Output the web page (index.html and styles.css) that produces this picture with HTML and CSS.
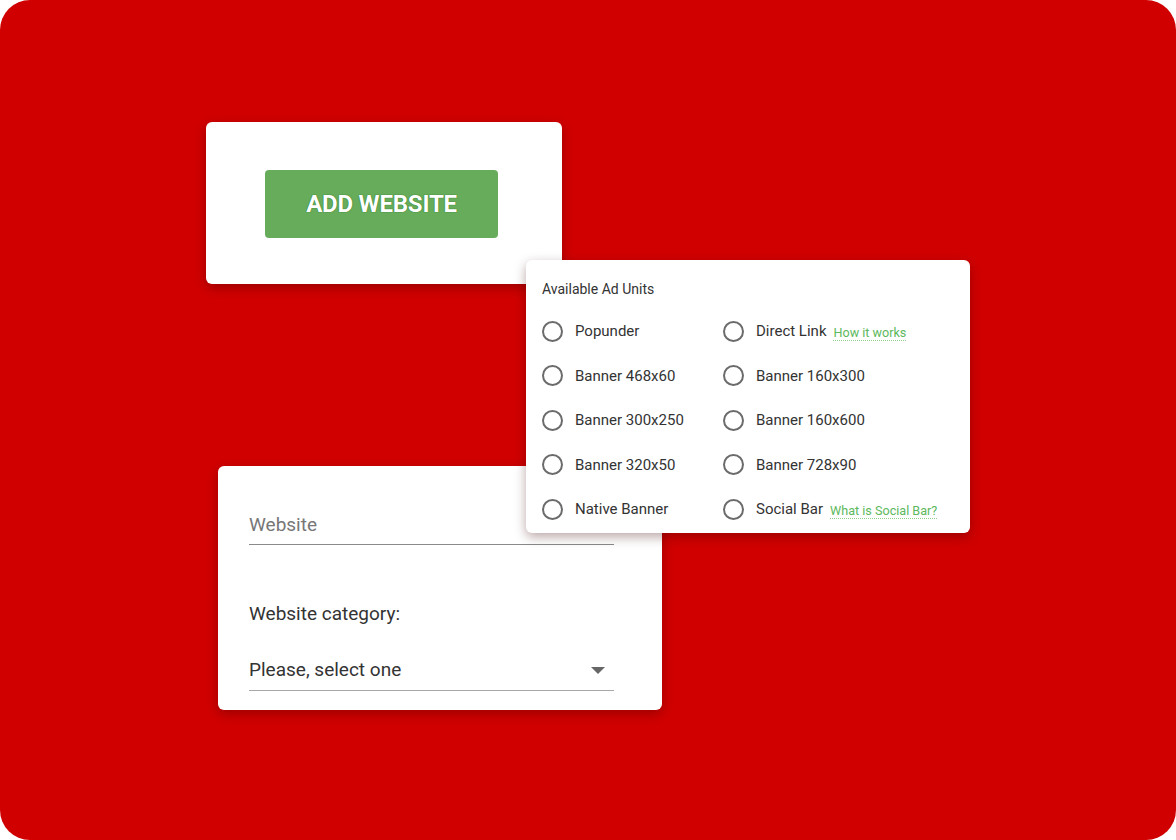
FILE: index.html
```html
<!DOCTYPE html>
<html>
<head>
<meta charset="utf-8">
<link rel="stylesheet" href="styles.css">
</head>
<body>
<div class="frame">
  <div class="card card-add">
    <button class="add-btn">ADD WEBSITE</button>
  </div>

  <div class="card card-form">
    <div class="field field-website">
      <span class="placeholder">Website</span>
    </div>
    <div class="cat-label">Website category:</div>
    <div class="field field-select">
      <span class="select-text">Please, select one</span>
      <span class="arrow"></span>
    </div>
  </div>

  <div class="card card-units">
    <div class="units-title">Available Ad Units</div>
    <div class="units-grid">
      <div class="unit"><span class="radio"></span><span class="unit-label">Popunder</span></div>
      <div class="unit"><span class="radio"></span><span class="unit-label">Direct Link</span><a class="hint">How it works</a></div>
      <div class="unit"><span class="radio"></span><span class="unit-label">Banner 468x60</span></div>
      <div class="unit"><span class="radio"></span><span class="unit-label">Banner 160x300</span></div>
      <div class="unit"><span class="radio"></span><span class="unit-label">Banner 300x250</span></div>
      <div class="unit"><span class="radio"></span><span class="unit-label">Banner 160x600</span></div>
      <div class="unit"><span class="radio"></span><span class="unit-label">Banner 320x50</span></div>
      <div class="unit"><span class="radio"></span><span class="unit-label">Banner 728x90</span></div>
      <div class="unit"><span class="radio"></span><span class="unit-label">Native Banner</span></div>
      <div class="unit"><span class="radio"></span><span class="unit-label">Social Bar</span><a class="hint">What is Social Bar?</a></div>
    </div>
  </div>
</div>
</body>
</html>
```

FILE: styles.css
```css
* { box-sizing: border-box; }
html, body {
  margin: 0;
  padding: 0;
  background: #ffffff;
}
body {
  font-family: Roboto, "Liberation Sans", Arial, sans-serif;
  width: 1176px;
  height: 840px;
  overflow: hidden;
}
.frame {
  position: relative;
  width: 1176px;
  height: 840px;
  background: #d10000;
  border-radius: 30px;
}
.card {
  position: absolute;
  background: #ffffff;
  border-radius: 6px;
  box-shadow: 0 4px 12px rgba(60, 0, 0, 0.35);
}

/* Card 1 */
.card-add {
  left: 206px;
  top: 122px;
  width: 356px;
  height: 162px;
  display: flex;
  align-items: center;
  justify-content: center;
  padding-top: 2px;
}
.add-btn {
  width: 233px;
  height: 68px;
  border: none;
  border-radius: 4px;
  background: #67ac5b;
  color: #ffffff;
  font-family: Roboto, "Liberation Sans", Arial, sans-serif;
  font-weight: 700;
  font-size: 24px;
  letter-spacing: -0.2px;
  text-shadow: 0 0 1px #2f7d2a, 0 0 1px #2f7d2a;
  margin-right: 5px;
  padding: 0;
}

/* Card 2 */
.card-units {
  left: 526px;
  top: 260px;
  width: 444px;
  height: 273px;
  padding: 19px 16px 0 16px;
  z-index: 3;
}
.units-title {
  font-size: 14px;
  line-height: 20px;
  color: #333333;
}
.units-grid {
  margin-top: 10px;
  display: grid;
  grid-template-columns: 181px 1fr;
  grid-auto-rows: 44.5px;
}
.unit {
  display: flex;
  align-items: center;
}
.radio {
  width: 21px;
  height: 21px;
  border: 2px solid #6b6b6b;
  border-radius: 50%;
  flex: none;
}
.unit-label {
  margin-left: 12px;
  font-size: 15px;
  color: #333333;
}
.hint {
  margin-left: 7px;
  font-size: 12.6px;
  color: #5cb85c;
  border-bottom: 1px dotted #8fd08c;
  line-height: 15px;
  margin-top: 3px;
}

/* Card 3 */
.card-form {
  left: 218px;
  top: 466px;
  width: 444px;
  height: 244px;
  padding: 48px 48px 0 31px;
  z-index: 2;
}
.field {
  border-bottom: 1px solid #8a8a8a;
  display: flex;
  align-items: center;
  justify-content: space-between;
  padding-bottom: 8px;
}
.placeholder {
  font-size: 19px;
  line-height: 22px;
  color: #777777;
}
.cat-label {
  margin-top: 57px;
  font-size: 19px;
  line-height: 24px;
  color: #333333;
}
.field-select {
  margin-top: 32px;
  border-bottom-color: #a8a8a8;
}
.select-text {
  font-size: 19px;
  line-height: 24px;
  color: #333333;
}
.arrow {
  width: 0;
  height: 0;
  border-left: 7px solid transparent;
  border-right: 7px solid transparent;
  border-top: 7px solid #666666;
  margin-right: 9px;
  margin-top: 1px;
}
```
